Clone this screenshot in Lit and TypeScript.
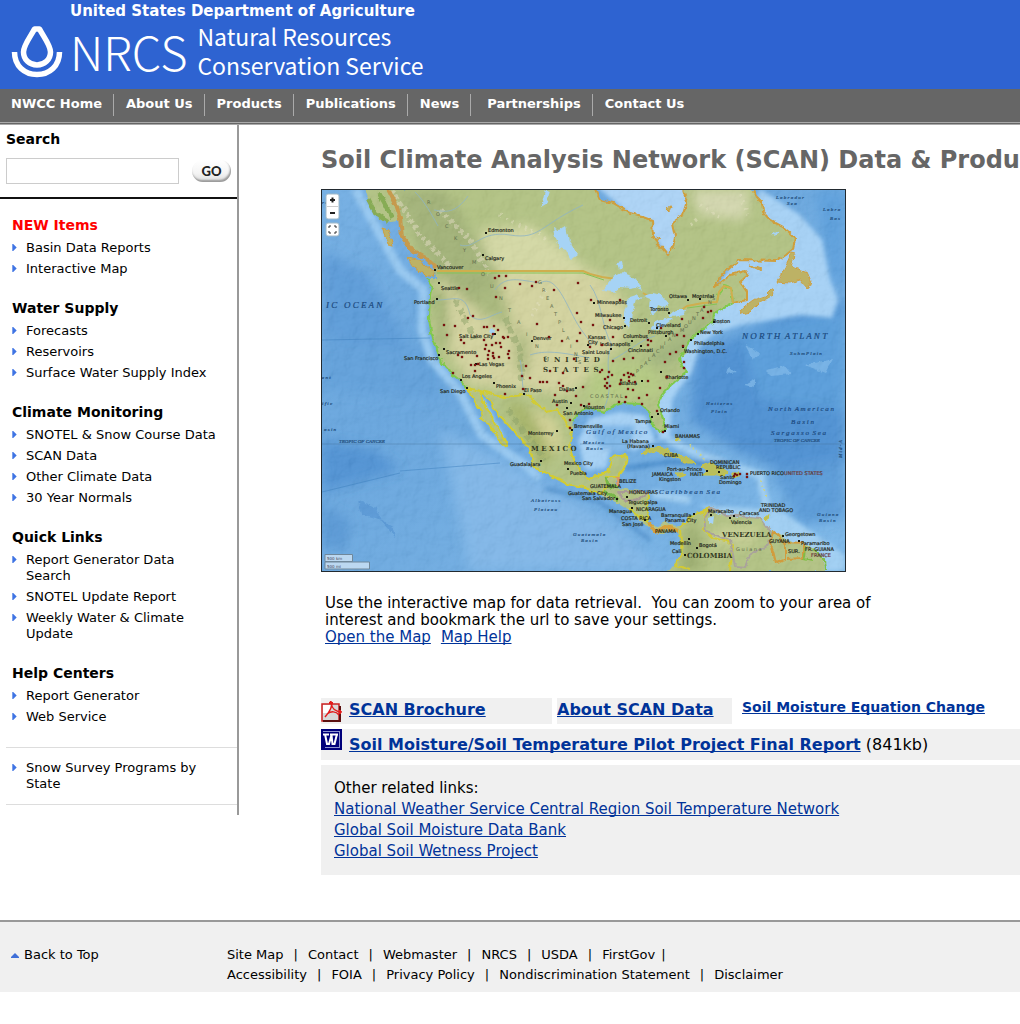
import { LitElement, html, css, svg } from "lit";
import { customElement } from "lit/decorators.js";

type Label = [number, number, string];

const NAV = ["NWCC Home", "About Us", "Products", "Publications", "News", "Partnerships", "Contact Us"];

const GROUPS = [
  { title: "NEW Items", hot: true, items: ["Basin Data Reports", "Interactive Map"] },
  { title: "Water Supply", hot: false, items: ["Forecasts", "Reservoirs", "Surface Water Supply Index"] },
  { title: "Climate Monitoring", hot: false, items: ["SNOTEL & Snow Course Data", "SCAN Data", "Other Climate Data", "30 Year Normals"] },
  { title: "Quick Links", hot: false, items: ["Report Generator Data Search", "SNOTEL Update Report", "Weekly Water & Climate Update"] },
  { title: "Help Centers", hot: false, items: ["Report Generator", "Web Service"] },
];

const FOOTER = [
  ["Site Map", "Contact", "Webmaster", "NRCS", "USDA", "FirstGov"],
  ["Accessibility", "FOIA", "Privacy Policy", "Nondiscrimination Statement", "Disclaimer"],
];

/* Map geometry */
const LAND =
  "M363 189 L368 199 L374 208 L379 219 L386 222 L398 220 L402 236 L409 246 L414 252 L426 258 L436 267 L434 272 L438 279 L427 279 L432 286 L430 295 L429 318 L431 332 L438 352 L442 363 L453 375 L461 381 L467 388 L472 396 L477 405 L483 412 L480 418 L490 425 L500 442 L507 447 L507 443 L500 430 L493 420 L490 412 L483 402 L480 391 L490 400 L493 408 L510 427 L520 438 L530 450 L532 458 L533 467 L547 473 L567 484 L583 487 L600 494 L617 503 L630 511 L640 521 L650 528 L655 533 L665 533 L672 529 L680 534 L680 542 L683 555 L677 561 L668 572 L825 572 L823 558 L813 548 L793 542 L780 535 L767 527 L760 518 L747 517 L738 518 L727 515 L717 514 L711 507 L700 512 L690 517 L680 527 L673 525 L665 522 L655 527 L648 522 L647 508 L649 492 L633 490 L618 488 L615 484 L621 475 L623 470 L628 457 L619 455 L612 457 L608 472 L597 476 L587 478 L583 473 L575 463 L570 448 L571 434 L573 422 L578 413 L586 408 L597 410 L604 412 L613 406 L623 403 L632 404 L640 404 L646 410 L650 413 L651 421 L655 427 L662 432 L665 428 L662 415 L658 405 L662 395 L672 384 L680 379 L687 372 L682 366 L680 358 L686 353 L687 345 L695 335 L702 330 L713 322 L714 313 L723 308 L733 303 L747 300 L747 292 L740 282 L748 275 L745 271 L730 275 L714 288 L720 277 L733 265 L740 260 L777 261 L786 255 L793 249 L795 238 L789 232 L783 227 L770 220 L763 212 L762 202 L757 197 L753 189 L683 189 L687 202 L683 215 L672 223 L675 236 L673 248 L668 255 L662 248 L653 237 L652 220 L641 216 L630 213 L613 203 L600 200 L595 189 Z";
const CANADA_COAST_W = "M388 189 L396 205 L400 218 L402 236 L409 246 L414 252 L426 258 L436 268";
const CANADA_COAST_E =
  "M595 189 L600 200 L613 203 L630 213 L641 216 L652 220 L653 237 L662 248 L668 255 L673 248 L675 236 L672 223 L683 215 L687 202 L683 189 M753 189 L757 197 L762 202 L763 212 L770 220 L783 227 L789 232 L795 238 L793 249 L786 255 L777 261 L740 260 L733 265 L720 277 L714 288 L730 275 L745 271 L748 275 L740 282 L747 292 L747 300 L733 303";
const US_BORDER_N = "M437 271 L583 271 L590 274 L602 277 L616 279 M643 293 L650 297 M677 313 L687 306 L703 303 L717 302 L719 292 L724 286 L731 288 L733 303";
const US_COAST =
  "M427 279 L432 286 L430 295 L429 318 L431 332 L438 352 L442 363 L453 375 L461 381 L467 388 M573 422 L578 413 L586 408 L597 410 L604 412 L613 406 L623 403 L640 404 L650 413 L651 421 L655 427 L662 432 L665 428 L662 415 L658 405 L662 395 L672 384 L687 372 L682 366 L680 358 L687 345 L695 335 L702 330 L713 322 L714 313 L723 308 L733 303 M717 302 L719 292 L724 286 L731 288 L733 303";
const MEXICO =
  "M467 388 L480 391 L505 397 L523 395 L530 397 L537 404 L547 412 L557 409 L562 416 L567 426 L572 430 L570 448 L575 463 L583 473 L587 478 L597 476 L608 472 L612 457 L619 455 L628 457 L623 470 L617 477 L606 477 L607 486 L600 494 L583 487 L567 484 L547 473 L533 467 L532 458 L530 450 L520 438 L510 427 L493 408 L490 400 L480 391 L483 402 L490 412 L493 420 L500 430 L507 443 L507 447 L500 442 L490 425 L480 418 L483 412 L477 405 L472 396 Z";
const LAKES =
  "M602 291 L608 284 L613 277 L622 272 L629 275 L637 280 L643 290 L636 287 L630 288 L620 287 L614 292 Z M629 298 L638 295 L643 297 L636 300 L633 310 L632 320 L628 328 L624 322 L624 312 Z M643 296 L653 293 L661 295 L668 304 L665 308 L658 305 L656 312 L652 315 L649 307 L650 299 Z M650 328 L655 322 L668 318 L674 318 L666 324 L656 330 Z M668 315 L676 310 L686 310 L684 315 L673 317 Z M553 228 L559 231 L566 226 L569 241 L578 255 L571 260 L566 250 L560 248 L555 237 Z M617 263 L622 262 L623 267 L619 269 Z M545 190 L550 191 L546 204 L541 207 Z M490 328 L495 331 L494 335 L489 332 Z M709 518 L714 516 L713 524 L709 522 Z M772 234 L779 230 L775 236 Z";
const ISLANDS_ORANGE =
  "M407 257 L420 260 L435 272 L433 277 L423 274 L414 267 Z M382 228 L388 230 L393 245 L388 244 Z M777 282 L785 267 L792 252 L796 253 L791 262 L795 268 L807 272 L811 281 L808 289 L800 280 L790 283 Z M740 310 L753 300 L765 296 L772 289 L773 295 L759 303 L750 312 L742 314 Z M749 265 L762 269 L759 270 Z M656 237 L661 239 L658 240 Z M665 208 L671 206 L669 212 Z";
const ISLANDS_YELLOW =
  "M641 454 L651 447 L664 448 L675 453 L686 457 L696 463 L684 463 L677 458 L663 454 L655 450 Z M701 466 L711 463 L720 467 L728 472 L724 475 L713 475 L703 475 L707 470 Z M675 473 L682 473 L686 476 L679 476 Z M732 473 L740 473 L739 477 L732 476 Z M676 436 L679 440 L677 441 Z M766 515 L769 515 L768 519 L765 518 Z";
const RIVERS =
  "M415 192 C425 202 432 215 438 226 M434 210 C446 212 455 214 468 196 M460 245 C475 250 480 230 510 235 S540 225 583 205 M437 300 C455 300 465 292 470 315 C480 325 490 315 502 312 M495 290 C505 275 520 280 540 283 C552 276 560 290 570 310 S582 330 592 345 M530 355 C545 350 560 352 590 358 M590 285 C602 300 602 330 612 345 C602 365 616 385 604 408 M612 360 C628 352 640 340 655 336 M520 360 C524 375 520 385 526 396";

/* Soil and climate stations */
const STATIONS: [number, number][] = [
  [495, 278], [499, 276], [506, 276], [520, 284], [505, 288], [536, 282], [532, 286], [554, 290], [578, 283], [467, 289],
  [459, 288], [496, 297], [577, 313], [581, 322], [468, 318], [473, 316], [444, 325], [455, 326], [484, 327], [487, 327],
  [494, 326], [498, 330], [447, 335], [461, 340], [464, 343], [484, 340], [493, 334], [504, 338], [508, 337], [503, 337],
  [496, 343], [500, 343], [501, 347], [486, 345], [492, 345], [485, 349], [489, 351], [493, 353], [493, 356], [488, 355],
  [458, 355], [462, 357], [477, 356], [478, 364], [475, 365], [471, 365], [453, 373], [475, 371], [508, 354], [509, 358],
  [509, 351], [499, 357], [488, 359], [494, 358], [526, 366], [530, 378], [550, 371], [563, 373], [563, 386], [537, 324],
  [549, 337], [562, 341], [574, 359], [577, 341], [580, 333], [522, 376], [523, 389], [540, 382], [543, 382], [547, 382],
  [555, 395], [557, 405], [559, 383], [567, 391], [505, 394], [576, 396], [581, 405], [570, 420], [570, 428], [583, 387],
  [591, 300], [620, 300], [610, 320], [593, 325], [613, 337], [590, 347], [648, 340], [651, 341], [648, 345], [661, 328],
  [704, 307], [708, 312], [711, 311], [703, 318], [682, 319], [677, 335], [684, 336], [683, 346], [676, 352], [670, 354],
  [665, 362], [684, 362], [684, 368], [633, 358], [624, 359], [613, 361], [602, 345], [602, 370], [609, 372], [608, 377],
  [605, 379], [600, 372], [628, 373], [631, 374], [629, 377], [633, 375], [624, 375], [607, 383], [610, 386], [607, 388],
  [621, 380], [629, 381], [635, 382], [628, 389], [633, 390], [620, 384], [648, 381], [667, 377], [660, 388], [647, 395],
  [639, 398], [642, 404], [626, 397], [619, 402], [625, 402], [605, 386], [612, 375], [657, 411], [663, 432],
  [735, 474], [737, 475], [740, 474], [747, 474], [747, 477], [734, 476], [589, 404],
];

const CITIES: Label[] = [
  [488, 232, "Edmonton"], [485, 260, "Calgary"], [437, 269, "Vancouver"], [441, 290, "Seattle"], [414, 304, "Portland"],
  [459, 338, "Salt Lake City"], [446, 354, "Sacramento"], [404, 360, "San Francisco"], [479, 366, "Las Vegas"],
  [462, 378, "Los Angeles"], [440, 393, "San Diego"], [496, 388, "Phoenix"], [524, 392, "El Paso"], [533, 340, "Denver"],
  [559, 391, "Dallas"], [552, 403, "Austin"], [563, 415, "San Antonio"], [584, 409, "Houston"], [574, 428, "Brownsville"],
  [528, 435, "Monterrey"], [510, 466, "Guadalajara"], [564, 465, "Mexico City"], [570, 475, "Puebla"],
  [597, 304, "Minneapolis"], [595, 317, "Milwaukee"], [603, 329, "Chicago"], [630, 322, "Detroit"], [650, 311, "Toronto"],
  [669, 298, "Ottawa"], [692, 298, "Montréal"], [713, 323, "Boston"], [700, 334, "New York"], [694, 345, "Philadelphia"],
  [684, 353, "Washington, D.C."], [656, 327, "Cleveland"], [648, 334, "Pittsburgh"], [623, 338, "Columbus"],
  [600, 346, "Indianapolis"], [628, 352, "Cincinnati"], [588, 339, "Kansas"], [588, 344, "City"], [582, 354, "Saint Louis"],
  [665, 379, "Charlotte"], [619, 385, "Atlanta"], [660, 412, "Orlando"], [635, 423, "Tampa"], [664, 428, "Miami"],
  [675, 438, "BAHAMAS"], [622, 443, "La Habana"], [627, 448, "(Havana)"], [664, 457, "CUBA"], [667, 471, "Port-au-Prince"],
  [652, 476, "JAMAICA"], [659, 481, "Kingston"], [690, 476, "HAITI"], [710, 464, "DOMINICAN"], [716, 469, "REPUBLIC"],
  [720, 479, "Santo"], [719, 484, "Domingo"], [750, 475, "PUERTO RICO"], [619, 483, "BELIZE"], [590, 488, "GUATEMALA"],
  [568, 495, "Guatemala City"], [582, 500, "San Salvador"], [629, 494, "HONDURAS"], [628, 504, "Tegucigalpa"],
  [609, 513, "Managua"], [636, 511, "NICARAGUA"], [621, 520, "COSTA RICA"], [622, 526, "San José"], [655, 533, "PANAMA"],
  [661, 517, "Barranquilla"], [665, 522, "Panama City"], [708, 513, "Maracaibo"], [739, 515, "Caracas"], [731, 524, "Valencia"],
  [670, 545, "Medellín"], [699, 547, "Bogotá"], [672, 553, "Cali"], [785, 536, "Georgetown"], [801, 545, "Paramaribo"],
  [769, 543, "GUYANA"], [788, 553, "SUR."], [805, 551, "FR. GUIANA"], [761, 507, "TRINIDAD"], [759, 512, "AND TOBAGO"],
];

const SEAS: Label[] = [
  [776, 199, "L a b r a d o r"], [787, 205, "S e a"], [823, 211, "L a b r a"], [830, 220, "B a s"], [790, 355, "S o h m  P l a i n"],
  [706, 405, "H a t t e r a s"], [711, 413, "P l a i n"], [583, 444, "M e x i c o"], [586, 450, "B a s i n"], [531, 502, "A l b a t r o s s"],
  [534, 511, "P l a t e a u"], [573, 536, "G u a t e m a l a"], [581, 542, "B a s i n"], [817, 516, "G u i a n a"], [819, 522, "B a s i n"],
  [322, 204, "r a t"], [322, 405, "i f i c"], [324, 431, "a s i n"], [322, 379, "e n t"],
];

const DOTS: [number, number][] = [
  [486, 233], [483, 255], [435, 270], [439, 283], [437, 299], [495, 334], [444, 349], [439, 355], [476, 364], [461, 380],
  [467, 388], [494, 383], [524, 394], [532, 341], [576, 388], [571, 403], [567, 408], [557, 431], [572, 430], [541, 461],
  [568, 469], [594, 303], [624, 318], [625, 326], [649, 323], [669, 313], [688, 300], [700, 299], [714, 322], [698, 334],
  [691, 340], [683, 347], [657, 328], [666, 336], [632, 341], [611, 349], [641, 346], [588, 345], [661, 372], [642, 381],
  [658, 414], [652, 417], [665, 431], [584, 406], [653, 446], [707, 471], [719, 472], [617, 499], [627, 497], [632, 508],
  [645, 520], [694, 514], [711, 515], [730, 518], [734, 516], [689, 539], [697, 548], [685, 555], [783, 536], [799, 541],
];

@customElement("station-map")
export class StationMap extends LitElement {
  static styles = css`
    :host { display: block; }
    .map { display: block; width: 100%; height: auto; box-sizing: border-box; border: 1px solid #222a30; }
    text { font-family: "DejaVu Sans", sans-serif; }
    .city { font-size: 5px; fill: #1d241a; stroke: #2a3020; stroke-width: 0.2; }
    .sea text { font-size: 5px; font-style: italic; font-family: "Liberation Serif", serif; fill: #234f7d; stroke: #234f7d; stroke-width: 0.2; }
    .ocean text { font-size: 7px; font-style: italic; font-family: "Liberation Serif", serif; fill: #1c4a80; stroke: #1c4a80; stroke-width: 0.2; }
    .ocean .large { font-size: 9px; }
    .country text { font-size: 7px; font-weight: 700; font-family: "DejaVu Serif", serif; fill: #33391f; }
    .range { font-size: 5px; fill: #5d6a4b; }
    .scale { font-size: 4px; fill: #445; }
  `;

  render() {
    return html`<svg class="map" viewBox="322 190 523 381" role="img" aria-label="Map of monitoring stations in North America">
      <defs>
        <linearGradient id="sea" x1="0" y1="0" x2="1" y2="1">
          <stop offset="0" stop-color="#67a8e2" />
          <stop offset=".35" stop-color="#599ddb" />
          <stop offset=".7" stop-color="#64a6e0" />
          <stop offset="1" stop-color="#70b2e8" />
        </linearGradient>
        <filter id="soft" x="-20%" y="-20%" width="140%" height="140%"><feGaussianBlur stdDeviation="6" /></filter>
        <filter id="mid" x="-20%" y="-20%" width="140%" height="140%"><feGaussianBlur stdDeviation="2" /></filter>
        <filter id="rough" x="-5%" y="-5%" width="110%" height="110%">
          <feTurbulence type="fractalNoise" baseFrequency=".16" numOctaves="3" seed="4" result="n" />
          <feDisplacementMap in="SourceGraphic" in2="n" scale="5" xChannelSelector="R" yChannelSelector="G" />
        </filter>
        <filter id="relief" x="0" y="0" width="100%" height="100%">
          <feTurbulence type="fractalNoise" baseFrequency=".07" numOctaves="5" seed="9" />
          <feDiffuseLighting surfaceScale="3" lighting-color="#fff"><feDistantLight azimuth="225" elevation="58" /></feDiffuseLighting>
        </filter>
        <clipPath id="land"><path d=${LAND} /></clipPath>
      </defs>

      <rect x="322" y="190" width="523" height="381" fill="url(#sea)" />
      <g filter="url(#soft)">
        <path d="M322 250 L370 275 L400 330 L420 370 L322 335 Z" fill="#4d93d6" />
        <path d="M322 340 L440 350 L440 400 L322 390 Z" fill="#5298d8" />
        <path d="M322 440 L375 450 L400 470 L322 492 Z" fill="#3f88d0" />
        <path d="M322 505 L350 520 L345 550 L322 545 Z" fill="#488fd2" />
        <path d="M440 430 L520 470 L620 530 L660 571 L470 571 Z" fill="#74b0e6" />
        <path d="M695 355 L770 320 L845 300 L845 470 L780 470 L735 450 L690 420 Z" fill="#3d86cf" />
        <path d="M740 335 L845 310 L845 410 L760 400 Z" fill="#4a94d8" />
        <path d="M815 190 L845 190 L845 290 L830 280 Z" fill="#4d97da" />
        <path d="M770 470 L845 460 L845 520 L800 525 Z" fill="#4b93d6" />
      </g>
      <g filter="url(#mid)">
        <path d="M355 189 L400 270 L424 290 L422 330 L432 360 L460 392 L482 435 L510 455 L525 465 L540 478" fill="none" stroke="#8cc3f0" stroke-width="9" />
        <path d="M760 189 L800 215 L822 240 L830 280 L838 300 L832 318 L800 315 L770 320 L740 325 L715 333 L700 345 L692 372 L682 385 L672 400 L670 440 L655 440 L645 415 L620 412 L590 418 L578 440 L585 470 L606 468 L610 450 L635 450 L660 440 L650 405 L690 330 L740 250 Z" fill="#9dcdf5" />
        <path d="M595 185 L690 185 L688 225 L668 257 L648 230 Z" fill="#a5d0f6" />
        <path d="M652 494 L690 500 M668 440 L700 455 L730 465 L760 475 L767 510" fill="none" stroke="#97cbf3" stroke-width="8" />
        <path d="M700 505 L780 510 L845 555 L845 571 L790 571 Z" fill="#97cbf3" />
        <path d="M590 425 L635 425 L630 450 L600 448 Z" fill="#72b1e7" />
        <path d="M625 468 L670 462 L735 464" fill="none" stroke="#3982c8" stroke-width="5" />
        <path d="M545 488 L600 502 L650 540" fill="none" stroke="#4388c9" stroke-width="4" />
        <path d="M480 398 L503 440" stroke="#9bd0f2" stroke-width="5" />
      </g>
      <g fill="#75b4ea" opacity=".7" filter="url(#rough)">
        <path d="M745 345 l15 8 l-6 8 z M765 370 l20 -4 l6 8 l-20 2 z M805 365 l28 -6 l-8 14 z M745 385 l10 -6 v8 z M728 368 l8 4 l-10 2 z" />
        <path d="M358 500 l18 8 l6 12 l-20 -6 z M380 520 l12 6 l4 12 z" fill="#4289cf" />
      </g>

      <g filter="url(#rough)">
        <path d=${LAND} fill="#abbd78" />
      </g>
      <g clip-path="url(#land)">
        <g filter="url(#soft)">
          <path d="M440 272 L600 272 L630 310 L620 345 L570 395 L520 390 L470 385 L435 330 Z" fill="#cfcf95" />
          <path d="M480 230 L530 225 L560 245 L590 272 L485 272 Z" fill="#d0d59c" />
          <path d="M395 190 L445 190 L500 275 L500 310 L470 305 L425 262 Z" fill="#9aac6c" />
          <path d="M690 190 L750 190 L745 220 L700 215 Z" fill="#d0d4a8" />
          <path d="M435 290 L446 290 L450 345 L440 350 Z" fill="#92a864" />
          <path d="M470 300 L500 285 L515 330 L480 315 Z" fill="#a1b270" />
          <path d="M515 330 L530 335 L528 375 L515 370 Z" fill="#a5b372" />
          <path d="M505 402 L525 405 L555 455 L540 465 Z" fill="#9dac59" />
          <path d="M530 405 L555 420 L565 450 L550 450 Z" fill="#d0ce8b" />
          <path d="M590 365 L650 365 L665 395 L590 405 Z" fill="#aec677" />
          <path d="M640 365 L710 310 L718 316 L670 365 Z" fill="#96ac70" />
          <path d="M685 530 L700 525 L700 571 L680 571 Z" fill="#91a461" />
          <path d="M710 530 L760 525 L755 545 L715 545 Z" fill="#c3cc8c" />
        </g>
        <g fill="none" filter="url(#rough)" opacity=".5">
          <path d="M392 190 L420 235 L452 268 M440 210 L470 240 L490 275" stroke="#e1d9bd" stroke-width="5" stroke-dasharray="4 3" />
          <path d="M455 300 L475 340 M505 318 L520 350 L522 380 M508 410 L545 460" stroke="#829958" stroke-width="6" stroke-dasharray="7 3" />
          <path d="M700 205 l20 12 M740 195 l8 20 M690 225 l10 -8 M500 215 l50 25 M545 290 l-15 30" stroke="#e2dfbb" stroke-width="4" stroke-dasharray="2 5" />
        </g>
      </g>
      <rect class="shade" x="322" y="190" width="523" height="381" filter="url(#relief)" opacity=".12" />

      <g fill="none" stroke-linejoin="round">
        <path d="M368 199 L376 214 L388 222 M378 192 L386 206 L392 218" stroke="#87ac55" stroke-width="4" filter="url(#rough)" />
        <g filter="url(#rough)">
          <path d=${CANADA_COAST_W} stroke="#c69a4e" stroke-width="4" />
          <path d=${CANADA_COAST_E} stroke="#cf9f3e" stroke-width="2" />
          <path d=${US_COAST} stroke="#80c94b" stroke-width="2" />
          <path d=${MEXICO} stroke="#d2cc32" stroke-width="2" />
          <path d="M606 477 L608 485 L618 488 M603 491 L612 495 L618 500" stroke="#78b749" stroke-width="3" />
          <path d="M618 476 L619 486" stroke="#d99767" stroke-width="3" />
          <path d="M618 492 L648 492 L635 501 L622 499 Z" stroke="#a99a96" stroke-width="2" />
          <path d="M648 493 L647 510 L648 521 L636 514 L630 508" stroke="#d0cd32" stroke-width="2" />
          <path d="M648 521 L655 532 L666 527 L678 531" stroke="#d6a23c" stroke-width="4" />
          <path d="M680 530 L682 555 L674 565 L690 569 M680 528 L690 517 L711 508 L704 515 L704 530 L712 538 L727 541 L733 546 L730 571" stroke="#d2ca35" stroke-width="2" />
          <path d="M711 508 L704 518 L706 532 L730 540 L735 566 L745 567 L750 555 L768 545 L772 533 L760 518 L727 515 Z" stroke="#aaa39c" stroke-width="2" />
          <path d="M773 531 L779 536 L785 545 L785 560 L776 563 L773 551 L770 543 Z M785 542 L803 543 L803 558 L787 559" stroke="#d19c3c" stroke-width="2" />
          <path d="M814 549 L825 560 L826 571 M805 547 L804 558 L813 560" stroke="#80bd45" stroke-width="2" />
        </g>
        <path d=${US_BORDER_N} stroke="#cfae4e" stroke-width="2" />
        <path d="M437 273 L583 273 L604 280 M687 308 L717 304" stroke="#86c355" stroke-width="1" />
        <path d=${RIVERS} stroke="#8fb4c4" stroke-width="1" opacity=".8" />
        <path d="M322 444 H530 M580 444 H845" stroke="#47729b" stroke-width="1" opacity=".4" />
        <path d="M322 492 L400 473 M322 340 L430 338 M400 471 L500 463" stroke="#3e80be" stroke-width="1" opacity=".5" />
      </g>
      <g filter="url(#rough)">
        <path d=${ISLANDS_ORANGE} fill="#bdb265" stroke="#cd9f42" stroke-width="1" />
        <path d=${ISLANDS_YELLOW} fill="#b9be5b" stroke="#cdc53d" stroke-width="1" />
        <path d="M677 436 L680 442 M690 444 L697 452 M700 455 L704 460 M760 480 L767 498" stroke="#c9d28a" stroke-width="2" stroke-dasharray="2 3" fill="none" />
      </g>
      <path d=${LAKES} fill="#a6d3f5" filter="url(#rough)" />

      <g class="country">
        <text x="543" y="362">U&#160; N&#160; I&#160; T&#160; E&#160; D</text>
        <text x="543" y="372">S&#160; T&#160; A&#160; T&#160; E&#160; S</text>
        <text x="531" y="451">M E X I C O</text>
        <text x="722" y="537">VENEZUELA</text>
        <text x="687" y="558">COLOMBIA</text>
      </g>
      <g class="range">
        ${[..."ROCKYMOUNTAINS"].map((c, i) => svg`<text x=${427 + i * 9} y=${204 + i * 12}>${c}</text>`)}
        ${[..."GREATPLAINS"].map((c, i) => svg`<text x=${538 + i * 4} y=${284 + i * 8}>${c}</text>`)}
        ${[..."APPALACHIAN"].map((c, i) => svg`<text x=${632 + i * 4} y=${377 - i * 4}>${c}</text>`)}
        ${[..."MOUNTAINS"].map((c, i) => svg`<text x=${680 + i * 4} y=${332 - i * 4}>${c}</text>`)}
        <text x="590" y="398">C O A S T A L</text>
        <text x="736" y="551">G u i a n a</text>
      </g>
      <g class="ocean">
        <text class="large" x="326" y="308">I C&#160;&#160; O C E A N</text>
        <text class="large" x="742" y="339">N O R T H&#160; A T L A N T</text>
        <text x="768" y="411">N o r t h&#160; A m e r i c a n</text>
        <text x="791" y="424">B a s i n</text>
        <text x="771" y="435">S a r g a s s o&#160; S e a</text>
        <text x="586" y="434">G u l f&#160; o f&#160; M e x i c o</text>
        <text x="659" y="494">C a r i b b e a n&#160; S e a</text>
      </g>
      <g class="sea">
        ${SEAS.map(([x, y, t]) => svg`<text x=${x} y=${y}>${t}</text>`)}
        <text x="339" y="443">TROPIC OF CANCER</text>
        <text x="774" y="442">TROPIC OF CANCER</text>
        <text transform="translate(842 458) rotate(-90)">M i d - A</text>
      </g>
      <g class="city">
        ${CITIES.map(([x, y, t]) => svg`<text x=${x} y=${y}>${t}</text>`)}
        <text x="784" y="475" fill="#a5475a">UNITED STATES</text>
        <text x="811" y="557" fill="#a5475a">FRANCE</text>
      </g>
      <g fill="#16180f">${DOTS.map(([x, y]) => svg`<rect x=${x - 1} y=${y - 1} width="2" height="2" />`)}</g>
      <g fill="#8a1712" stroke="#4f0d0a" stroke-width=".3">
        ${STATIONS.map(([x, y]) => svg`<rect x=${x - 1} y=${y - 1} width="2" height="2" />`)}
      </g>

      <g fill="#fff" stroke="#9fb8c8" stroke-width="1">
        <rect x="326" y="194" width="13" height="25" rx="2" />
        <rect x="326" y="223" width="13" height="13" rx="2" />
      </g>
      <path d="M327 206.500 H338" stroke="#ccc" />
      <path d="M330 200 H335 M332.500 197.500 V202.500 M330 213 H335" stroke="#222" stroke-width="2" />
      <path d="M329 228 V226 H331 M334 226 H336 V228 M336 231 V233 H334 M331 233 H329 V231" fill="none" stroke="#333" stroke-width="1" />
      <g fill="#cfe4f5" fill-opacity=".8" stroke="#70889b">
        <path d="M325 554.500 H352.500 V561.500 H325 Z" />
        <path d="M325 562 H369.500 V569 H325 Z" />
      </g>
      <g class="scale"><text x="327" y="560">500 km</text><text x="327" y="568">500 mi</text></g>
    </svg>`;
  }
}

@customElement("app-root")
export class AppRoot extends LitElement {
  static styles = css`
    :host {
      display: block;
      overflow: hidden;
      background: #fff;
      color: #000;
      font-family: Verdana, "DejaVu Sans", sans-serif;
      font-size: 13px;
      line-height: 16px;
    }
    a { color: inherit; text-decoration: none; }
    ul { list-style: none; margin: 0; padding: 0; }

    .banner { display: flex; background: #2e63d1; color: #fff; padding: 2px 10px 7px; }
    .drop { width: 54px; height: 54px; margin-top: 23px; }
    .words { display: flex; flex-direction: column; margin-left: 6px; }
    .dept { font-size: 15px; line-height: 18px; font-weight: 700; white-space: nowrap; }
    .name { display: flex; gap: 10px; align-items: center; }
    .nrcs { font-family: "Noto Sans CJK SC", "Open Sans", sans-serif; font-weight: 300; font-size: 47px; line-height: 62px; }
    .full { font-family: "Noto Sans CJK SC", "Open Sans", sans-serif; font-size: 23px; line-height: 29px; }

    .nav { background: #666; color: #fff; border-bottom: 3px double #aaa; padding: 5px 0 6px; display: flex; font-weight: 700; }
    .nav a { padding: 2px 11px 4px; border-right: 1px solid #aaa; line-height: 16px; }
    .nav a + a { padding-left: 12px; }
    .nav a:last-child { border-right: 0; }
    .nav a.wide { padding-left: 16px; }

    .page { display: flex; align-items: flex-start; }
    .side { flex: 0 0 237px; border-right: 2px solid #999; padding-bottom: 10px; }
    .search { border-bottom: 2px solid #111; padding: 5px 6px 13px; }
    .search label { display: block; font-size: 14px; font-weight: 700; line-height: 18px; margin-bottom: 10px; }
    .row { display: flex; align-items: center; justify-content: space-between; }
    .field { width: 173px; height: 26px; box-sizing: border-box; border: 1px solid #ccc; padding: 2px 4px; font: inherit; }
    .go {
      width: 39px; height: 22px; padding: 0; border: 0; border-radius: 11px;
      font-family: Lato, sans-serif; font-weight: 900; font-size: 13px; line-height: 20px; color: #222;
      background: linear-gradient(#fff, #f4f4f4 60%, #ddd);
      box-shadow: inset -1px -2px 2px #999;
    }
    .group { padding: 0 12px 22px; }
    .groups { padding-top: 17px; }
    .group h2 { margin: 0 0 6px; font-size: 14px; line-height: 18px; }
    .group h2.hot { color: #f00; }
    .group ul { display: flex; flex-direction: column; gap: 5px; }
    .item { display: flex; gap: 9px; }
    .mark { flex: none; width: 5px; height: 7px; margin-top: 4px; }
    .item a { max-width: 198px; }
    .item.narrow a { max-width: 180px; }
    .extra { margin-left: 6px; border: solid #ddd; border-width: 1px 0; padding: 12px 6px; }

    .main { flex: 1; min-width: 0; padding: 20px 0 0 82px; }
    .main h1 { margin: 0 0 14px; font-size: 24px; line-height: 30px; color: #666; white-space: nowrap; }
    .figure { width: 525px; max-width: 100%; }
    .intro { margin: 23px 0 52px 4px; font-size: 15px; line-height: 17px; }
    .intro p { margin: 0; max-width: 550px; }
    .intro nav { display: flex; gap: 10px; }
    .link { color: #039; text-decoration: underline; text-decoration-skip-ink: none; }
    .docs { display: grid; gap: 5px; }
    .trio { display: flex; gap: 5px; white-space: nowrap; }
    .cell { display: flex; background: #f0f0f0; gap: 7px; font-size: 16px; line-height: 24px; font-weight: 700; height: 26px; }
    .cell.first { width: 231px; }
    .cell.second { width: 175px; }
    .cell.plain { background: none; padding-left: 5px; font-size: 14px; line-height: 18px; }
    .icon { flex: none; width: 21px; height: 21px; }
    .cell .icon { margin-top: 3px; }
    .report { display: flex; gap: 7px; background: #f0f0f0; height: 31px; font-size: 16px; line-height: 31px; white-space: nowrap; }
    .related { background: #f0f0f0; padding: 13px; font-size: 15px; line-height: 21px; }
    .related p { margin: 0; }

    .foot { margin-top: 45px; border-top: 2px solid #999; background: #f0f0f0; padding: 23px 11px 7px; display: flex; line-height: 20px; }
    .top { display: flex; gap: 5px; align-items: center; align-self: flex-start; width: 216px; }
    .up { width: 8px; height: 5px; }
    .foot ul { display: flex; }
    .foot li + li::before { content: "|"; padding: 0 10px; }
    .foot ul.closed::after { content: "|"; padding-left: 6px; }
  `;

  private item(text: string) {
    return html`<li class="item ${text.includes("Data Search") || text.includes("Weekly") ? "narrow" : ""}">
      <svg class="mark" viewBox="0 0 5 8" aria-hidden="true"><path d="M0 0 H1 L5 4 L1 8 H0 Z" fill="#3f74e4" /></svg>
      <a href="#">${text}</a>
    </li>`;
  }

  render() {
    return html`
      <header class="banner">
        <svg class="drop" viewBox="0 0 54 54" aria-hidden="true">
          <path fill="none" stroke="#fff" stroke-width="5.500" stroke-linejoin="round" d="M24.500 4 C21 11 13.500 20 13.500 27 C13.500 34.500 19.500 40 27 40 C34.500 40 40.500 34.500 40.500 27 C40.500 20 33 11 29.500 4 Z" />
          <path fill="none" stroke="#fff" stroke-width="5.500" d="M4.500 27 C4.500 41 14.500 49.500 27 49.500 C39.500 49.500 49.500 41 49.500 27" />
        </svg>
        <div class="words">
          <div class="dept">United States Department of Agriculture</div>
          <div class="name">
            <div class="nrcs">NRCS</div>
            <div class="full">Natural Resources<br />Conservation Service</div>
          </div>
        </div>
      </header>
      <nav class="nav" aria-label="Main">
        ${NAV.map((n) => html`<a class=${n === "Partnerships" ? "wide" : ""} href="#">${n}</a>`)}
      </nav>
      <div class="page">
        <aside class="side">
          <form class="search" @submit=${(e: Event) => e.preventDefault()}>
            <label for="q">Search</label>
            <div class="row">
              <input class="field" id="q" type="text" />
              <button class="go" type="submit">GO</button>
            </div>
          </form>
          <div class="groups">
            ${GROUPS.map(
              (g) => html`<section class="group">
                <h2 class=${g.hot ? "hot" : ""}>${g.title}</h2>
                <ul>${g.items.map((i) => this.item(i))}</ul>
              </section>`
            )}
          </div>
          <ul class="extra">${this.item("Snow Survey Programs by State")}</ul>
        </aside>
        <main class="main">
          <h1>Soil Climate Analysis Network (SCAN) Data &amp; Products</h1>
          <station-map class="figure"></station-map>
          <div class="intro">
            <p>Use the interactive map for data retrieval.&#160; You can zoom to your area of interest and bookmark the url to save your settings.</p>
            <nav><a class="link" href="#">Open the Map</a><a class="link" href="#">Map Help</a></nav>
          </div>
          <div class="docs">
            <div class="trio">
              <div class="cell first">
                <svg class="icon" viewBox="0 0 21 21" aria-hidden="true">
                  <path d="M1 3 H18 V20 H1 Z" fill="#d8d8d8" stroke="#c22" stroke-width="1.500" />
                  <path d="M19 5 V20 H2" fill="none" stroke="#5b1010" stroke-width="2" />
                  <path d="M2 4 H9 V12 H2 Z" fill="#fff" />
                  <path d="M9 0 C13 2 10 9 4 16 M10 2 C11 8 14 11 21 11 M6 13 C10 10 15 10 18 14" fill="none" stroke="#e21c1c" stroke-width="1.500" />
                  <path d="M8 2 H12 M19 9 V13" stroke="#e21c1c" stroke-width="2" />
                </svg>
                <a class="link" href="#">SCAN Brochure</a>
              </div>
              <div class="cell second"><a class="link" href="#">About SCAN Data</a></div>
              <div class="cell plain"><a class="link" href="#">Soil Moisture Equation Change</a></div>
            </div>
            <div class="report">
              <svg class="icon" viewBox="0 0 21 21" aria-hidden="true">
                <rect width="21" height="21" fill="#00007b" />
                <path d="M2 2.500 H19 M18.500 2 V19 M4 18.500 H19" stroke="#8f95cf" stroke-width="1" />
                <path d="M2 5.500 H8 M9 5.500 H17 M4 5 L6 15 H8 L10.500 6 L11.500 15 H13.500 L16 5" fill="none" stroke="#fff" stroke-width="2" />
              </svg>
              <span><b><a class="link" href="#">Soil Moisture/Soil Temperature Pilot Project Final Report</a></b> (841kb)</span>
            </div>
            <section class="related">
              <p>Other related links:</p>
              <ul>
                <li><a class="link" href="#">National Weather Service Central Region Soil Temperature Network</a></li>
                <li><a class="link" href="#">Global Soil Moisture Data Bank</a></li>
                <li><a class="link" href="#">Global Soil Wetness Project</a></li>
              </ul>
            </section>
          </div>
        </main>
      </div>
      <footer class="foot">
        <a class="top" href="#">
          <svg class="up" viewBox="0 0 8 5" aria-hidden="true"><path d="M4 0 L8 4 V5 H0 V4 Z" fill="#3f6fd8" /></svg>
          Back to Top
        </a>
        <div>
          ${FOOTER.map((row, i) => html`<ul class=${i === 0 ? "closed" : ""}>${row.map((t) => html`<li><a href="#">${t}</a></li>`)}</ul>`)}
        </div>
      </footer>
    `;
  }
}
